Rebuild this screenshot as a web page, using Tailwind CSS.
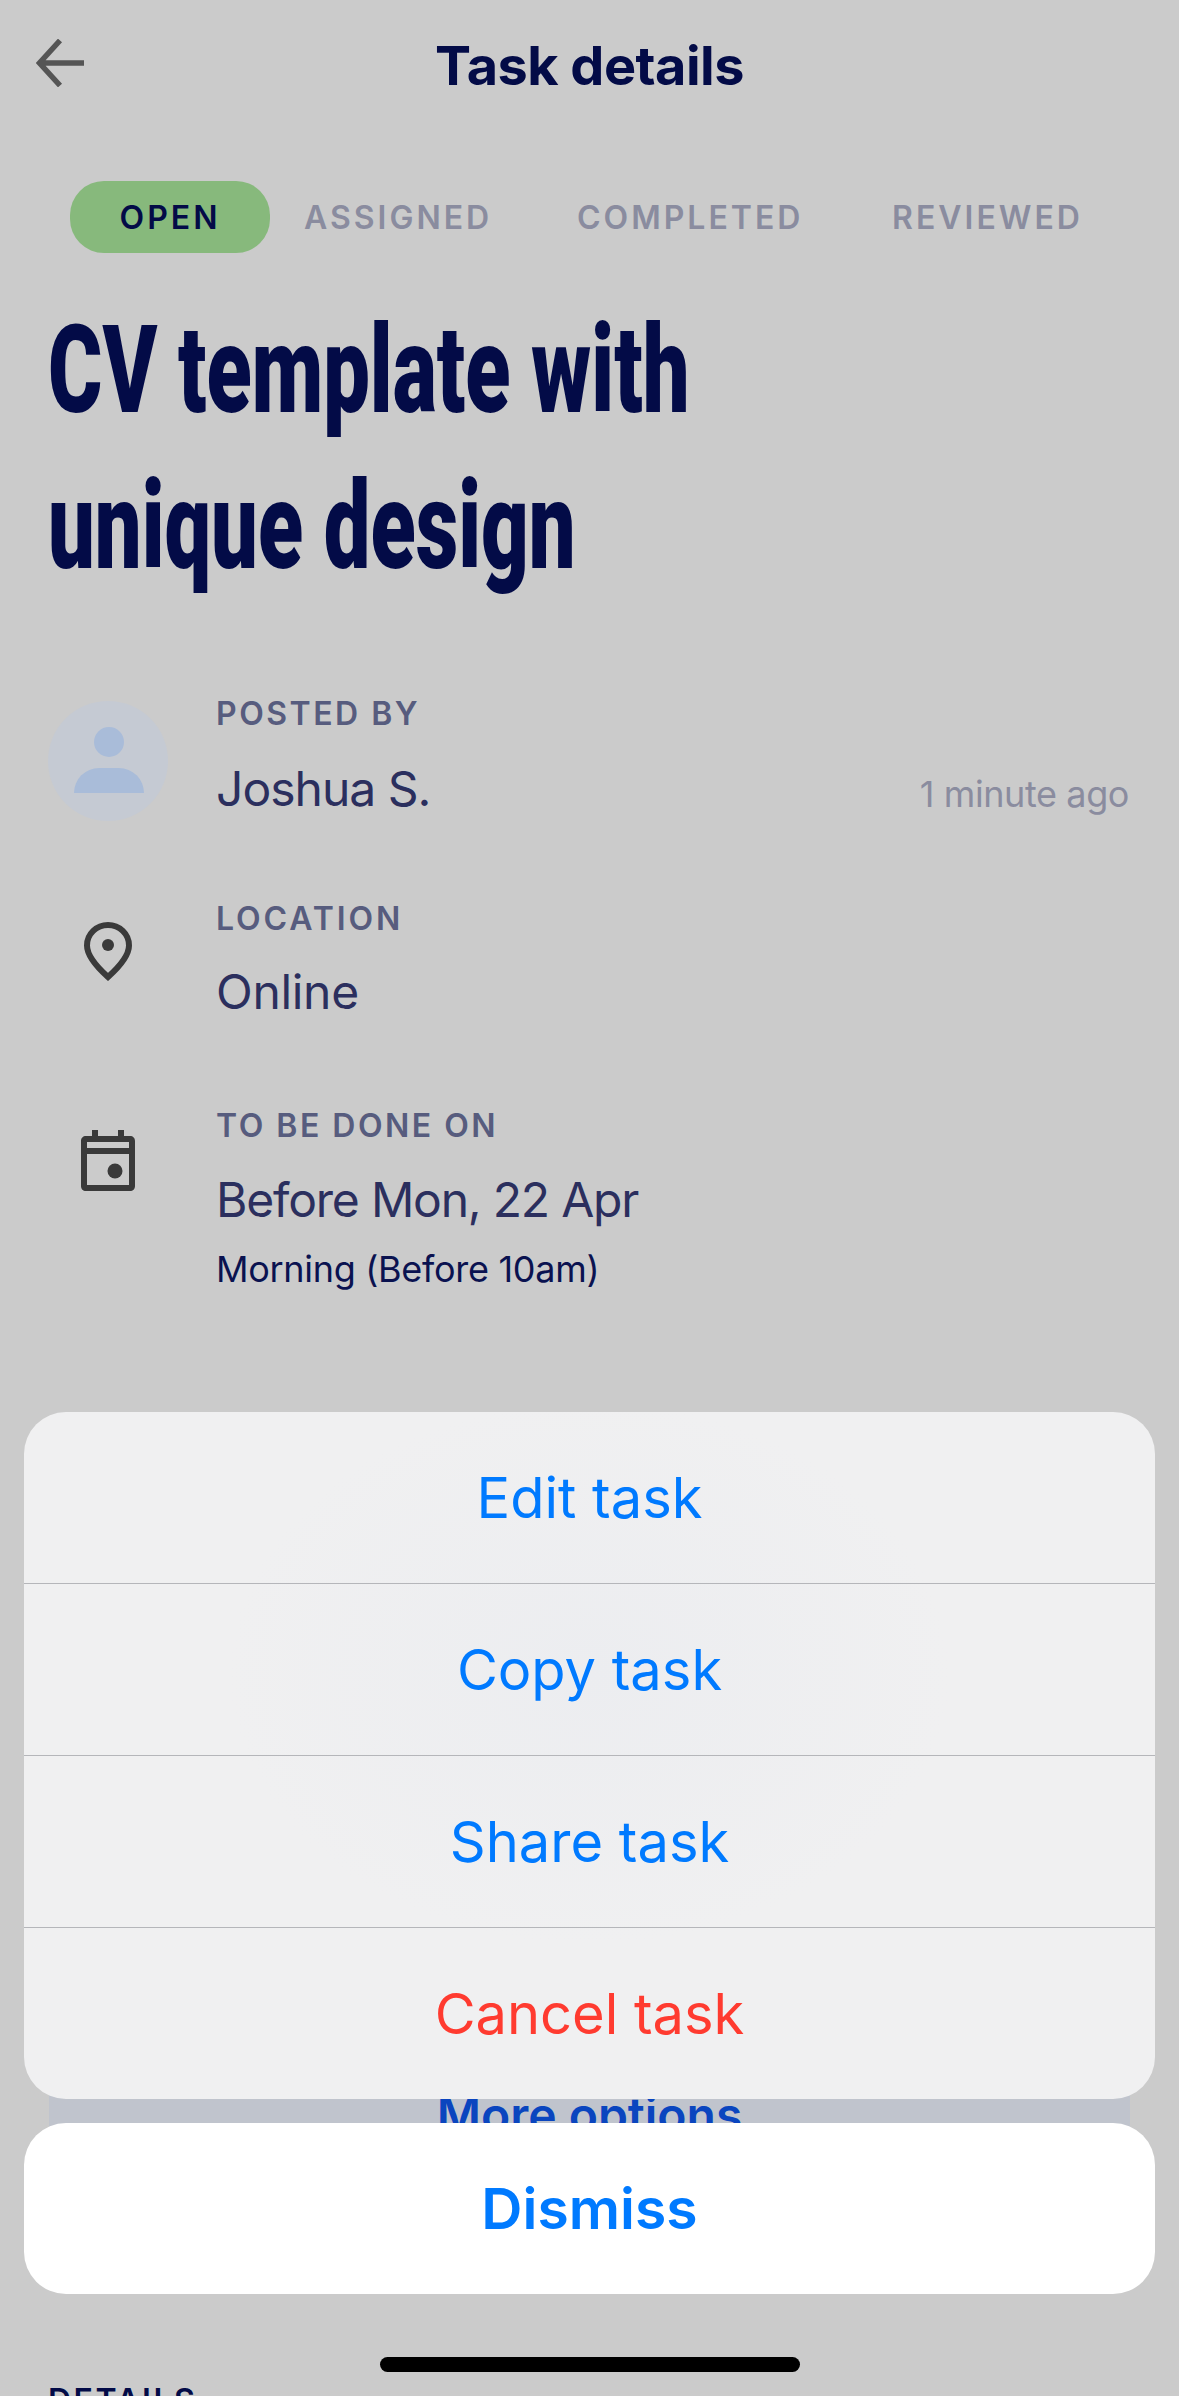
<!DOCTYPE html>
<html lang="en">
<head>
  <meta charset="UTF-8" />
  <meta name="viewport" content="width=device-width, initial-scale=1.0" />
  <title>Task details</title>
  <script src="https://cdn.jsdelivr.net/npm/@tailwindcss/browser@4"></script>
</head>
<body class="bg-[#cbcbcb]">
  <div class="relative w-[1179px] h-[2396px] overflow-hidden bg-[#cbcbcb] font-['Inter',sans-serif]">

    <!-- Header -->
    <div class="relative h-[181px] pt-[37px]">
      <svg class="absolute left-[36px] top-[39px] w-[48px] h-[48px]" viewBox="0 0 48 48" fill="none" stroke="#555555" stroke-width="5.500">
        <path d="M48 24H4M24 1.500 3.500 24 24 46.500" />
      </svg>
      <h1 class="text-center text-[54px] leading-[58px] font-bold tracking-[-0.5px] text-[#030b47]">Task details</h1>
    </div>

    <!-- Status tabs -->
    <div class="flex items-center h-[72px] pl-[70px] text-[32px] font-semibold tracking-[3px] text-[#8a8c9f]">
      <div class="w-[200px] h-[72px] pt-[2px] rounded-[34px] bg-[#87b97c] flex items-center justify-center text-[#030b47]">OPEN</div>
      <div class="ml-[34px] w-[273px] pt-[2px]">ASSIGNED</div>
      <div class="w-[315px] pt-[2px]">COMPLETED</div>
      <div class="pt-[2px]">REVIEWED</div>
    </div>

    <!-- Title -->
    <div class="mt-[40px] pl-[48px] h-[312px] font-['Roboto',sans-serif] text-[122px] leading-[156px] font-black text-[#030b47]">
      <div class="origin-left scale-x-[0.68] whitespace-nowrap">CV template with</div>
      <div class="origin-left scale-x-[0.68] whitespace-nowrap">unique design</div>
    </div>

    <!-- Posted by -->
    <div class="flex mt-[96px] pl-[48px] pr-[50px] h-[120px]">
      <div class="relative w-[120px] h-[120px] rounded-full bg-[#c5cad3] shrink-0">
        <div class="absolute left-[46px] top-[26px] w-[30px] h-[30px] rounded-full bg-[#a9bcd9]"></div>
        <div class="absolute left-[26px] top-[67px] w-[70px] h-[25px] rounded-t-[34px] bg-[#a9bcd9]"></div>
      </div>
      <div class="ml-[48px] -mt-[7px]">
        <div class="text-[32px] leading-[40px] font-semibold tracking-[2.5px] text-[#575c7e]">POSTED BY</div>
        <div class="mt-[25px] text-[48px] leading-[60px] tracking-[-1px] text-[#2b2f5e]">Joshua S.</div>
      </div>
      <div class="ml-auto mt-[70px] text-[36px] leading-[46px] tracking-[-0.4px] text-[#8a8c9f]">1 minute ago</div>
    </div>

    <!-- Location -->
    <div class="flex mt-[78px] pl-[84px]">
      <svg class="w-[48px] h-[59px] mt-[23px] shrink-0" viewBox="0 0 48 59" fill="none">
        <path d="M24 3C12.500 3 3 12 3 23.500 3 34 14 46 24 55 34 46 45 34 45 23.500 45 12 35.500 3 24 3Z" stroke="#3a3a3a" stroke-width="6" />
        <circle cx="24" cy="23" r="6" fill="#3a3a3a" />
      </svg>
      <div class="ml-[84px]">
        <div class="text-[32px] leading-[40px] font-semibold tracking-[2.9px] text-[#575c7e]">LOCATION</div>
        <div class="mt-[23px] text-[48px] leading-[60px] tracking-[-0.3px] text-[#2b2f5e]">Online</div>
      </div>
    </div>

    <!-- Date -->
    <div class="flex mt-[84px] pl-[81px]">
      <svg class="w-[54px] h-[61px] mt-[24px] shrink-0" viewBox="0 0 54 61" fill="none">
        <path d="M11 0h6v6h20V0h6v6h6c3 0 5 2 5 5v45c0 3-2 5-5 5H5c-3 0-5-2-5-5V11c0-3 2-5 5-5h6V0ZM6 18h42v-6H6v6Zm0 6v31h42V24H6Z" fill="#3a3a3a" />
        <circle cx="34" cy="41" r="7.500" fill="#3a3a3a" />
      </svg>
      <div class="ml-[81px]">
        <div class="text-[32px] leading-[40px] font-semibold tracking-[2.5px] text-[#575c7e]">TO BE DONE ON</div>
        <div class="mt-[24px] text-[48px] leading-[60px] tracking-[-1.2px] text-[#2b2f5e]">Before Mon, 22 Apr</div>
        <div class="mt-[15px] text-[36px] leading-[48px] tracking-[-0.3px] text-[#0a1250]">Morning (Before 10am)</div>
      </div>
    </div>

    <!-- More options card, mostly covered by the sheet -->
    <div class="mt-[700px] mx-[49px] h-[200px] pt-[92px] bg-[#c0c4cd] text-center text-[48px] leading-[60px] font-semibold text-[#0a45bf]">More options</div>

    <div class="mt-[188px] pl-[48px] text-[32px] leading-[40px] font-semibold tracking-[2.5px] text-[#030b47]">DETAILS</div>

    <!-- Action sheet -->
    <div class="absolute left-[24px] top-[1412px] w-[1131px]">
      <div class="rounded-[42px] bg-[radial-gradient(ellipse_at_50%_38%,#ecedf0_0%,#f0f0f1_45%)] text-[56px] text-[#007aff] text-center">
        <div class="h-[172px] leading-[173px] border-b border-[#b5b6ba]">Edit task</div>
        <div class="h-[172px] leading-[173px] border-b border-[#b5b6ba]">Copy task</div>
        <div class="h-[172px] leading-[173px] border-b border-[#b5b6ba]">Share task</div>
        <div class="h-[171px] leading-[173px] text-[#ff3b30]">Cancel task</div>
      </div>
      <div class="mt-[24px] h-[171px] rounded-[42px] bg-white text-center text-[57px] leading-[171px] font-semibold text-[#007aff]">Dismiss</div>
    </div>

    <div class="absolute left-[380px] top-[2357px] w-[420px] h-[15px] rounded-full bg-black"></div>
  </div>
</body>
</html>
